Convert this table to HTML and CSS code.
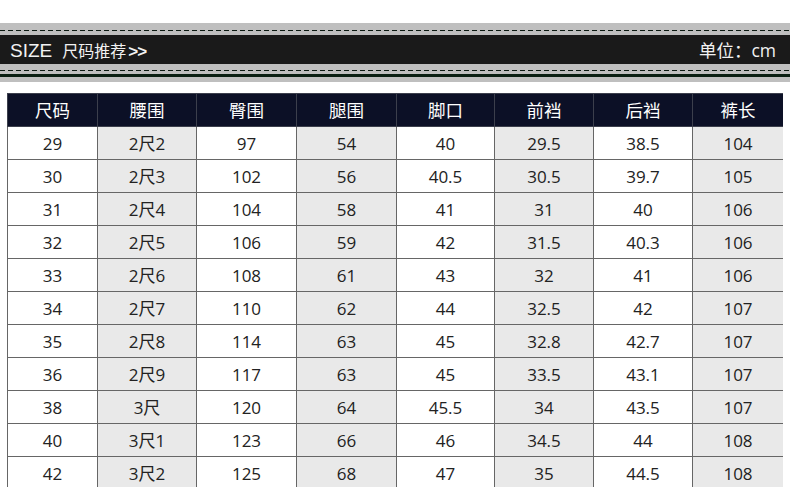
FILE: index.html
```html
<!DOCTYPE html>
<html lang="zh">
<head>
<meta charset="utf-8">
<title>SIZE 尺码推荐</title>
<link rel="stylesheet" href="styles.css">
</head>
<body>
<div class="banner">
  <div class="stitch stitch-top"></div>
  <div class="bar">
    <div class="title"><span class="size">SIZE</span><span class="rec">尺码推荐</span><span class="arrows">&gt;&gt;</span></div>
    <div class="unit">单位：cm</div>
  </div>
  <div class="stitch stitch-bottom"></div>
  <div class="green"></div>
  <div class="tail"></div>
</div>
<div class="table-wrap">
<table class="sizes">
  <colgroup>
    <col class="c1"><col class="c2"><col class="c3"><col class="c4"><col class="c5"><col class="c6"><col class="c7"><col class="c8">
  </colgroup>
  <thead>
    <tr><th>尺码</th><th>腰围</th><th>臀围</th><th>腿围</th><th>脚口</th><th>前裆</th><th>后裆</th><th>裤长</th></tr>
  </thead>
  <tbody>
    <tr><td>29</td><td>2尺2</td><td>97</td><td>54</td><td>40</td><td>29.5</td><td>38.5</td><td>104</td></tr>
    <tr><td>30</td><td>2尺3</td><td>102</td><td>56</td><td>40.5</td><td>30.5</td><td>39.7</td><td>105</td></tr>
    <tr><td>31</td><td>2尺4</td><td>104</td><td>58</td><td>41</td><td>31</td><td>40</td><td>106</td></tr>
    <tr><td>32</td><td>2尺5</td><td>106</td><td>59</td><td>42</td><td>31.5</td><td>40.3</td><td>106</td></tr>
    <tr><td>33</td><td>2尺6</td><td>108</td><td>61</td><td>43</td><td>32</td><td>41</td><td>106</td></tr>
    <tr><td>34</td><td>2尺7</td><td>110</td><td>62</td><td>44</td><td>32.5</td><td>42</td><td>107</td></tr>
    <tr><td>35</td><td>2尺8</td><td>114</td><td>63</td><td>45</td><td>32.8</td><td>42.7</td><td>107</td></tr>
    <tr><td>36</td><td>2尺9</td><td>117</td><td>63</td><td>45</td><td>33.5</td><td>43.1</td><td>107</td></tr>
    <tr><td>38</td><td>3尺</td><td>120</td><td>64</td><td>45.5</td><td>34</td><td>43.5</td><td>107</td></tr>
    <tr><td>40</td><td>3尺1</td><td>123</td><td>66</td><td>46</td><td>34.5</td><td>44</td><td>108</td></tr>
    <tr><td>42</td><td>3尺2</td><td>125</td><td>68</td><td>47</td><td>35</td><td>44.5</td><td>108</td></tr>
  </tbody>
</table>
</div>
</body>
</html>
```
FILE: styles.css
```css
html, body {
  margin: 0;
  padding: 0;
  background: #ffffff;
}
body {
  padding-top: 23px;
  font-family: "Open Sans", "Noto Sans CJK SC", sans-serif;
  overflow: hidden;
  height: 479px;
}
.banner {
  display: flex;
  flex-direction: column;
}
.stitch {
  background-color: #bfbfbf;
  position: relative;
}
.stitch::after {
  content: "";
  position: absolute;
  left: 0;
  right: 0;
  height: 1px;
  background: repeating-linear-gradient(90deg, #0c1a12 0 5px, transparent 5px 8px);
}
.stitch-top {
  height: 12px;
}
.stitch-top::after {
  top: 7px;
}
.stitch-bottom {
  height: 10px;
}
.stitch-bottom::after {
  top: 6px;
}
.bar {
  height: 29px;
  background: #1a1a1a;
  display: flex;
  align-items: center;
  justify-content: space-between;
  padding: 0 14px 0 10px;
  color: #f2f2f2;
}
.title {
  display: flex;
  align-items: baseline;
}
.size {
  font-family: "Liberation Sans", Arial, sans-serif;
  font-size: 19px;
  margin-right: 10px;
}
.rec {
  font-family: "Noto Sans CJK SC", sans-serif;
  font-size: 16px;
}
.arrows {
  font-family: "Liberation Sans", Arial, sans-serif;
  font-weight: bold;
  font-size: 17px;
  letter-spacing: -1px;
  margin-left: 2px;
}
.unit {
  font-family: "Open Sans", "Noto Sans CJK SC", sans-serif;
  font-size: 17.5px;
}
.green {
  height: 3px;
  background: #0a1f12;
}
.tail {
  height: 5px;
  background: #bfbfbf;
}
.table-wrap {
  margin: 11px 0 0 7px;
  width: 776px;
  height: 394px;
  overflow: hidden;
}
.sizes {
  border-collapse: collapse;
  width: 776px;
  table-layout: fixed;
  font-size: 17px;
  color: #222222;
}
.c1 { width: 90px; }
.c2 { width: 99px; }
.c3 { width: 100px; }
.c4 { width: 100px; }
.c5 { width: 98px; }
.c6 { width: 99px; }
.c7 { width: 99px; }
.c8 { width: 91px; }
.sizes th,
.sizes td {
  height: 32px;
  padding: 0;
  text-align: center;
  vertical-align: middle;
  border: 1px solid #666666;
  font-weight: normal;
  line-height: 1;
}
.sizes th {
  background: #0c1026;
  color: #ffffff;
  font-size: 17.5px;
  border-color: #3c3f4c;
  font-family: "Noto Sans CJK SC", sans-serif;
}
.sizes td:nth-child(even) {
  background: #e9e9e9;
}
```
